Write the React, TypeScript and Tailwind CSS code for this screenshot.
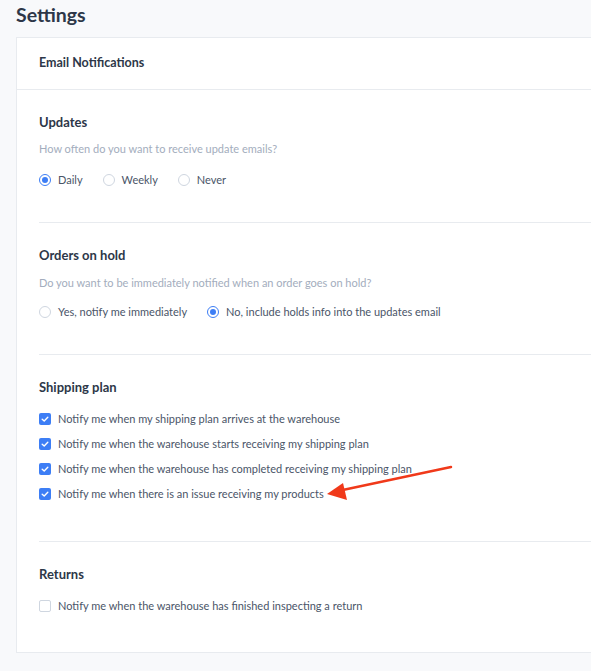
import React from "react";

const font = { fontFamily: "Lato, 'Open Sans', sans-serif" };

const Radio = ({ checked, label }: { checked?: boolean; label: string }) => (
    <label className="flex items-center gap-[7px] h-4">
        <span
            className={`w-3 h-3 rounded-full border flex items-center justify-center bg-white ${
                checked ? "border-[#3d7ef5]" : "border-[#cfd6e0]"
            }`}
        >
            {checked && <span className="w-[6px] h-[6px] rounded-full bg-[#3d7ef5]" />}
        </span>
        <span className="text-[11px] text-[#4a5568]">{label}</span>
    </label>
);

const Checkbox = ({ checked, label }: { checked?: boolean; label: string }) => (
    <label className="flex items-center gap-[7px] h-4">
        <span
            className={`w-3 h-3 rounded-[2px] flex items-center justify-center ${
                checked ? "bg-[#3d7ef5]" : "border border-[#cfd6e0] bg-white"
            }`}
        >
            {checked && (
                <svg viewBox="0 0 12 12" className="w-3 h-3">
                    <path d="M3.2 6.2 L5.2 8 L8.8 4.3" fill="none" stroke="white" strokeWidth="1.4" strokeLinecap="round" strokeLinejoin="round" />
                </svg>
            )}
        </span>
        <span className="text-[11px] text-[#4a5568]">{label}</span>
    </label>
);

const Heading = ({ children }: { children: React.ReactNode }) => (
    <h3 className="text-[13px] leading-4 font-bold text-[#2d3748]">{children}</h3>
);

export default function App() {
    return (
        <div className="relative min-h-screen overflow-hidden bg-[#f8f9fb]" style={font}>
            <h1 className="px-4 pt-[3px] h-[37px] text-[19.5px] leading-6 font-bold text-[#2d3748]">Settings</h1>

            <div className="ml-4 w-[620px] bg-white border border-[#e8ebef]">
                <div className="h-[52px] flex items-center px-[22px] border-b border-[#e8ebef]">
                    <h2 className="text-[12.5px] font-bold text-[#2d3748]">Email Notifications</h2>
                </div>

                <div className="pl-[22px]">
                    <section className="pt-6 pb-[34px] border-b border-[#e8ebef]">
                        <Heading>Updates</Heading>
                        <p className="mt-[11px] text-[11px] leading-4 text-[#a3adbd]">
                            How often do you want to receive update emails?
                        </p>
                        <div className="mt-[15px] flex gap-5">
                            <Radio checked label="Daily" />
                            <Radio label="Weekly" />
                            <Radio label="Never" />
                        </div>
                    </section>

                    <section className="pt-6 pb-[34px] border-b border-[#e8ebef]">
                        <Heading>Orders on hold</Heading>
                        <p className="mt-3 text-[11px] leading-4 text-[#a3adbd]">
                            Do you want to be immediately notified when an order goes on hold?
                        </p>
                        <div className="mt-[13px] flex gap-5">
                            <Radio label="Yes, notify me immediately" />
                            <Radio checked label="No, include holds info into the updates email" />
                        </div>
                    </section>

                    <section className="pt-6 pb-[39px] border-b border-[#e8ebef]">
                        <Heading>Shipping plan</Heading>
                        <div className="mt-4 flex flex-col gap-[9px]">
                            <Checkbox checked label="Notify me when my shipping plan arrives at the warehouse" />
                            <Checkbox checked label="Notify me when the warehouse starts receiving my shipping plan" />
                            <Checkbox checked label="Notify me when the warehouse has completed receiving my shipping plan" />
                            <Checkbox checked label="Notify me when there is an issue receiving my products" />
                        </div>
                    </section>

                    <section className="pt-6 pb-[38px]">
                        <Heading>Returns</Heading>
                        <div className="mt-4">
                            <Checkbox label="Notify me when the warehouse has finished inspecting a return" />
                        </div>
                    </section>
                </div>
            </div>

            <svg className="absolute left-0 top-0 pointer-events-none" width="591" height="671">
                <line x1="451" y1="467" x2="338" y2="491" stroke="#f0391a" strokeWidth="2.5" strokeLinecap="round" />
                <polygon points="327,494 343,483 347,500" fill="#f0391a" />
            </svg>
        </div>
    );
}
